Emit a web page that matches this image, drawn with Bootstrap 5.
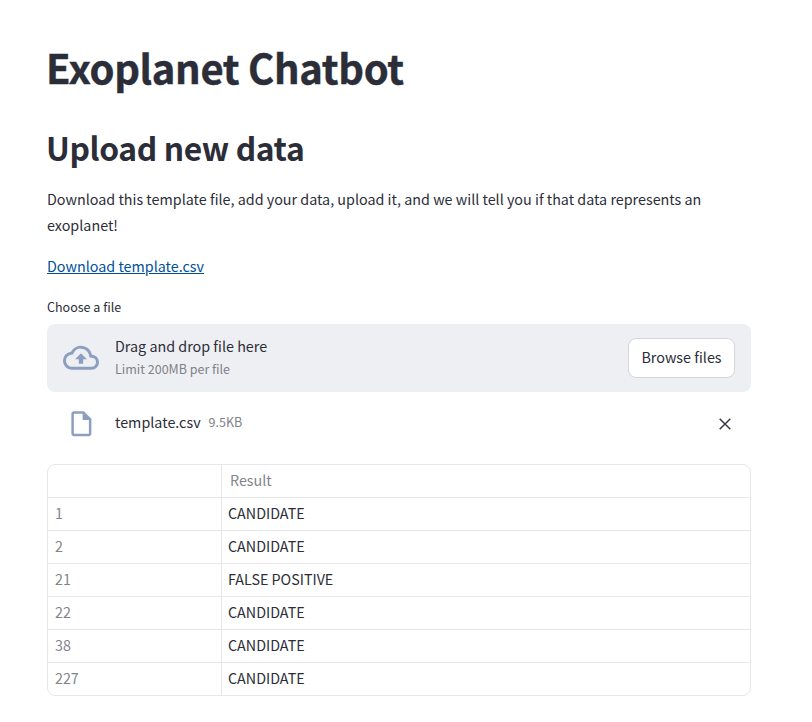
<!DOCTYPE html>
<html lang="en">
<head>
<meta charset="utf-8">
<meta name="viewport" content="width=device-width, initial-scale=1">
<title>Exoplanet Chatbot</title>
<link href="https://cdn.jsdelivr.net/npm/bootstrap@5.3.0/dist/css/bootstrap.min.css" rel="stylesheet">
<style>
  body { font-family: "Noto Sans CJK SC", "Noto Sans", sans-serif; font-size: 14.33px; line-height: 26px; color: #2b2d38; background: #fff; overflow: hidden; }
  .page { width: 704px; margin-left: 47px; padding-top: 41px; }
  h1 { font-size: 40px; line-height: 53px; font-weight: 700; letter-spacing: -.34px; margin: 0 0 32px -1px; color: #2b2d38; -webkit-text-stroke: .4px #2b2d38; }
  h2 { font-size: 31.8px; line-height: 43px; font-weight: 600; letter-spacing: -.36px; margin: 0 0 17px -1px; color: #2b2d38; }
  .intro { margin-bottom: 15px; }
  .link-row { margin-bottom: 18px; }
  .link-row a { color: #00509b; }
  .field-label { font-size: 12.5px; line-height: 20px; margin-bottom: 7px; }
  .dropzone { height: 68px; background: #eeeff3; border-radius: 8px; padding: 0 16px; }
  .ico { color: #8d9fc1; width: 36px; margin-right: 16px; }
  .drop-text { padding-bottom: 2px; }
  .line { line-height: 23px; }
  .note { font-size: 12.5px; color: #808189; }
  .browse { width: 107px; height: 40px; font-size: 14.33px; line-height: 26px; padding: 0 0 2px; background: #fff; color: #2b2d38; border: 1px solid #d6d6d9; border-radius: 8px; }
  .file-row { height: 32px; margin: 16px 0 24px; padding: 0 16px; }
  .file-row .name { line-height: 27px; padding-bottom: 6px; }
  .close-x { width: 20px; height: 32px; color: #31333f; }
  .grid { border: 1px solid #e7e7e9; border-radius: 8px; }
  .grid-row { height: 33px; line-height: 30px; font-size: 14.3px; }
  .grid-row:first-child { height: 32px; }
  .grid-row + .grid-row { border-top: 1px solid #e7e7e9; }
  .idx { width: 174px; border-right: 1px solid #e7e7e9; padding-left: 7px; color: #83848c; }
  .val { padding-left: 6px; }
  .val-head { padding-left: 8px; color: #83848c; }
</style>
</head>
<body>
<main class="page">
  <h1>Exoplanet Chatbot</h1>
  <h2>Upload new data</h2>
  <p class="intro">Download this template file, add your data, upload it, and we will tell you if that data represents an<br>exoplanet!</p>
  <p class="link-row"><a href="#">Download template.csv</a></p>
  <div class="field-label">Choose a file</div>
  <section class="dropzone d-flex align-items-center">
    <svg class="ico" height="36" viewBox="0 0.25 24 24" fill="currentColor"><path d="M19.35 10.04A7.49 7.49 0 0 0 12 4C9.11 4 6.6 5.64 5.35 8.04A5.994 5.994 0 0 0 0 14c0 3.31 2.69 6 6 6h13c2.76 0 5-2.24 5-5 0-2.64-2.05-4.78-4.65-4.96zM19 18H6c-2.21 0-4-1.79-4-4 0-2.05 1.53-3.76 3.56-3.97l1.07-.11.5-.95A5.469 5.469 0 0 1 12 6c2.62 0 4.88 1.86 5.39 4.43l.3 1.5 1.53.11A2.98 2.98 0 0 1 22 15c0 1.65-1.35 3-3 3zM8 13h2.55v3h2.9v-3H16l-4-4z"/></svg>
    <div class="drop-text flex-grow-1">
      <div class="line">Drag and drop file here</div>
      <div class="line note">Limit 200MB per file</div>
    </div>
    <button class="btn browse" type="button">Browse files</button>
  </section>
  <div class="file-row d-flex align-items-center">
    <span class="ico d-flex justify-content-center"><svg width="30" height="30" viewBox="-0.3 0.3 24 24" fill="currentColor"><path d="M14 2H6c-1.1 0-2 .9-2 2v16c0 1.1.89 2 1.99 2H18c1.1 0 2-.9 2-2V8l-6-6zM6 20V4h7v5h5v11H6z"/></svg></span>
    <div class="name flex-grow-1 d-flex gap-2"><span>template.csv</span><span class="note">9.5KB</span></div>
    <button class="btn p-0 border-0 close-x d-flex align-items-center justify-content-center" type="button" aria-label="Remove file"><svg width="12" height="12" viewBox="0 0 12 12" fill="none" stroke="currentColor" stroke-width="1.4"><path d="M.7.7l10.6 10.6M11.3.7L.7 11.3"/></svg></button>
  </div>
  <div class="grid">
    <div class="grid-row d-flex"><div class="idx"></div><div class="val-head">Result</div></div>
    <div class="grid-row d-flex"><div class="idx">1</div><div class="val">CANDIDATE</div></div>
    <div class="grid-row d-flex"><div class="idx">2</div><div class="val">CANDIDATE</div></div>
    <div class="grid-row d-flex"><div class="idx">21</div><div class="val">FALSE POSITIVE</div></div>
    <div class="grid-row d-flex"><div class="idx">22</div><div class="val">CANDIDATE</div></div>
    <div class="grid-row d-flex"><div class="idx">38</div><div class="val">CANDIDATE</div></div>
    <div class="grid-row d-flex"><div class="idx">227</div><div class="val">CANDIDATE</div></div>
  </div>
</main>
<script src="https://cdn.jsdelivr.net/npm/bootstrap@5.3.0/dist/js/bootstrap.bundle.min.js"></script>
</body>
</html>
